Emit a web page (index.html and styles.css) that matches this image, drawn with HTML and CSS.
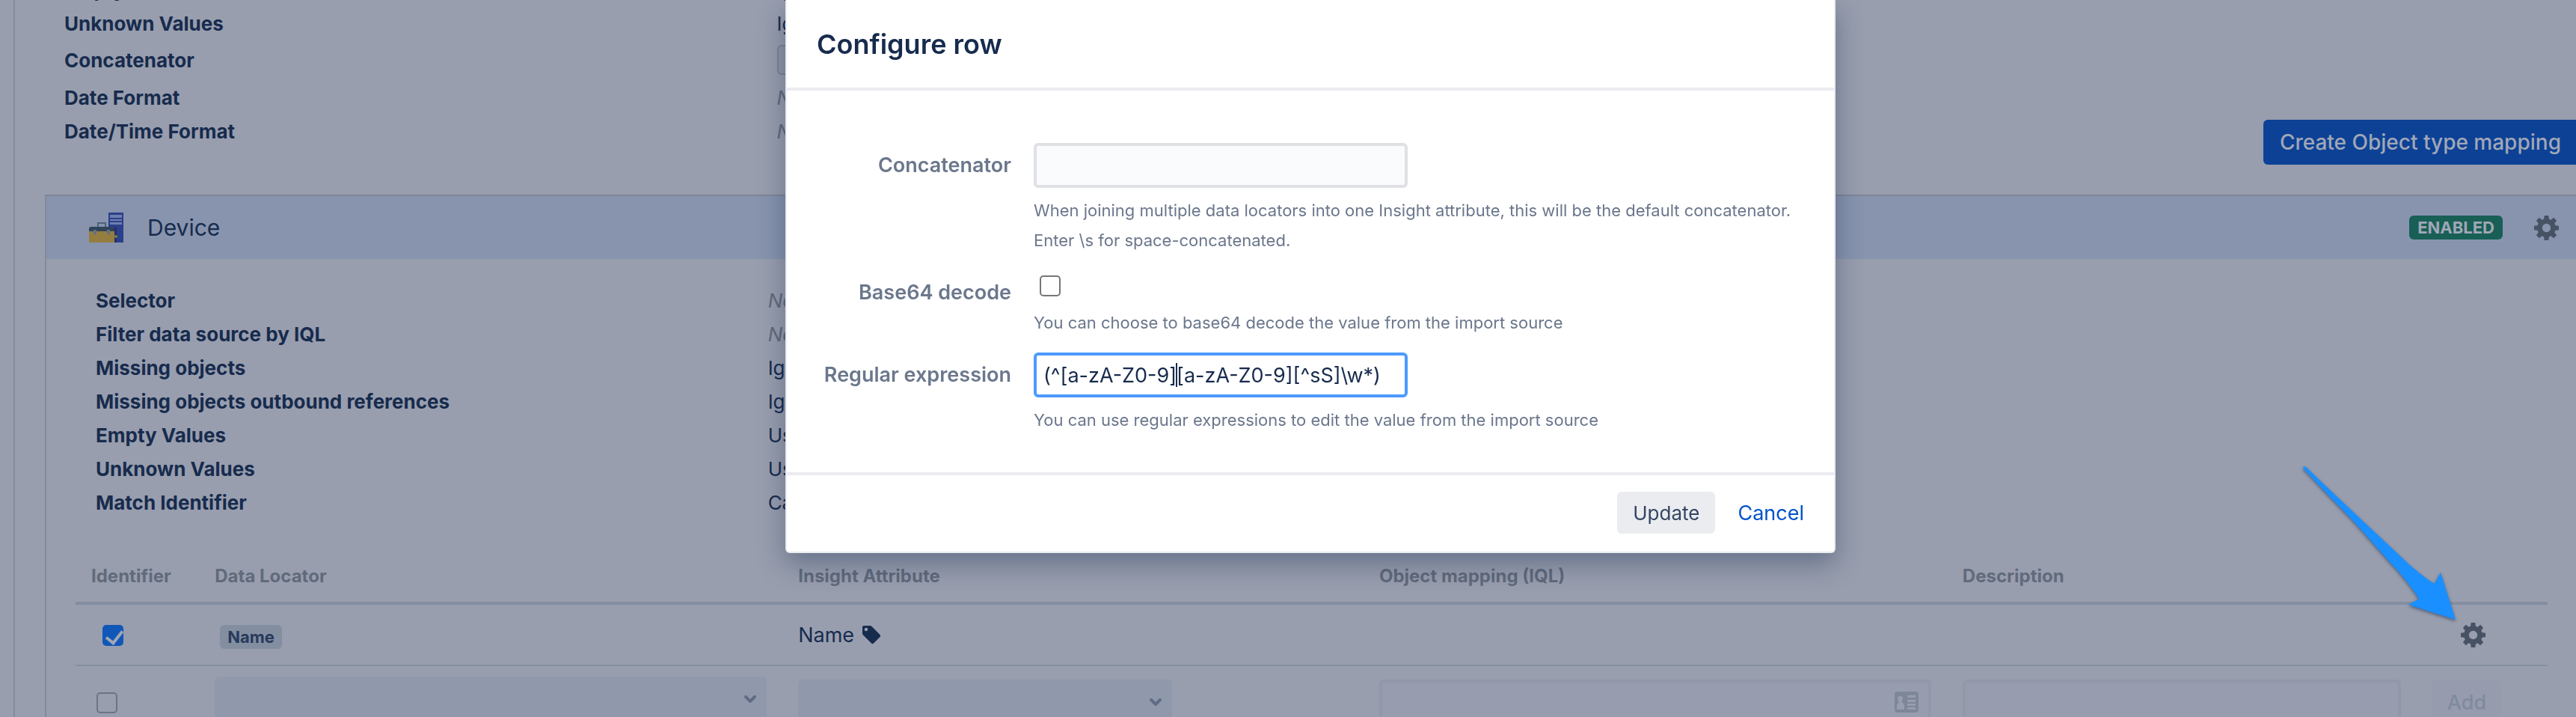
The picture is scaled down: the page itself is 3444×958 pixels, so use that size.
FILE: index.html
```html
<!DOCTYPE html>
<html lang="en">
<head>
    <meta charset="UTF-8">
    <meta name="viewport" content="width=device-width, initial-scale=1.0">
    <title>Object type mapping - Configure row</title>
    <link rel="stylesheet" href="styles.css">
</head>
<body>
    <svg class="sprite" width="0" height="0" aria-hidden="true">
        <symbol id="gear" viewBox="0 0 32 32">
            <g fill="currentColor">
                <path fill-rule="evenodd" d="M16 4a12 12 0 1 0 0 24a12 12 0 1 0 0-24zM16 10.500a5.500 5.500 0 1 1 0 11a5.500 5.500 0 1 1 0-11z"/>
                <path id="tooth" d="M12.500 6l.8-6h5.400l.8 6z"/>
                <use href="#tooth" transform="rotate(45 16 16)"/>
                <use href="#tooth" transform="rotate(90 16 16)"/>
                <use href="#tooth" transform="rotate(135 16 16)"/>
                <use href="#tooth" transform="rotate(180 16 16)"/>
                <use href="#tooth" transform="rotate(225 16 16)"/>
                <use href="#tooth" transform="rotate(270 16 16)"/>
                <use href="#tooth" transform="rotate(315 16 16)"/>
            </g>
        </symbol>
        <symbol id="chevron" viewBox="0 0 18 12">
            <path d="M3 3l6 6l6-6" fill="none" stroke="currentColor" stroke-width="4" stroke-linecap="round" stroke-linejoin="round"/>
        </symbol>
    </svg>

    <main class="page">
        <section class="summary">
            <dl class="details">
                <dt>Empty Values</dt><dd>Ig</dd>
                <dt>Unknown Values</dt><dd>Ig</dd>
                <dt class="tall">Concatenator</dt><dd class="tall"><span class="code-box"></span></dd>
                <dt>Date Format</dt><dd class="none">No</dd>
                <dt>Date/Time Format</dt><dd class="none">No</dd>
            </dl>
            <button class="create-button" type="button">Create Object type mapping</button>
        </section>

        <section class="panel">
            <header class="panel-header">
                <svg class="device-icon" viewBox="0 0 46 40" width="46" height="40">
                    <rect x="26" y="0" width="20" height="40" fill="#2b3f8b"/>
                    <path d="M28 3h16v4H28zM28 9h16v2H28zM28 13h16v3H28z" fill="#6f7fae"/>
                    <rect x="31" y="20" width="6" height="20" fill="#22306e"/>
                    <circle cx="36" cy="32" r="2" fill="#6d8a4a"/>
                    <path d="M12 20v-6h10v6" fill="none" stroke="#4b637b" stroke-width="2"/>
                    <path d="M0 26v-4q0-3 3-3h28q3 0 3 3v4z" fill="#2f4459"/>
                    <rect x="0" y="25" width="34" height="15" fill="#957d40"/>
                    <path d="M6 23h4v6h-4zM24 23h4v6h-4z" fill="#5f7184"/>
                </svg>
                <h2>Device</h2>
                <span class="status">ENABLED</span>
                <button class="icon-button" type="button" aria-label="Device settings"><svg width="33" height="33"><use href="#gear"/></svg></button>
            </header>

            <dl class="details panel-details">
                <dt>Selector</dt><dd class="none">No</dd>
                <dt>Filter data source by IQL</dt><dd class="none">No</dd>
                <dt>Missing objects</dt><dd>Ig</dd>
                <dt>Missing objects outbound references</dt><dd>Ig</dd>
                <dt>Empty Values</dt><dd>Us</dd>
                <dt>Unknown Values</dt><dd>Us</dd>
                <dt>Match Identifier</dt><dd>Ca</dd>
            </dl>

            <table class="mapping">
                <thead>
                    <tr>
                        <th class="col-id">Identifier</th>
                        <th class="col-locator">Data Locator</th>
                        <th class="col-attr">Insight Attribute</th>
                        <th class="col-iql">Object mapping (IQL)</th>
                        <th class="col-desc">Description</th>
                        <th></th>
                    </tr>
                </thead>
                <tbody>
                    <tr class="saved">
                        <td class="check"><input type="checkbox" checked aria-label="Name is identifier"></td>
                        <td class="tag-cell"><span class="tag">Name</span></td>
                        <td>
                            <span class="attribute">Name
                                <svg viewBox="0 0 26 26" width="26" height="26"><path fill-rule="evenodd" fill="currentColor" d="M1 3Q1 1 3 1h8q1.500 0 2.500 1l11 11q1.500 1.500 0 3l-8.500 8.500q-1.500 1.500-3 0L2 13.500Q1 12.500 1 11zM6 3.700a2.300 2.300 0 1 0 0 4.600a2.300 2.300 0 1 0 0-4.600z"/></svg>
                            </span>
                        </td>
                        <td></td>
                        <td></td>
                        <td class="actions"><button class="icon-button" type="button" aria-label="Configure row"><svg width="33" height="33"><use href="#gear"/></svg></button></td>
                    </tr>
                    <tr class="new">
                        <td class="check"><input type="checkbox" aria-label="New row is identifier"></td>
                        <td class="locator">
                            <div class="select-wrap">
                                <select aria-label="Data locator"><option></option></select>
                                <svg width="18" height="12"><use href="#chevron"/></svg>
                            </div>
                        </td>
                        <td>
                            <div class="select-wrap half">
                                <select aria-label="Insight attribute"><option></option></select>
                                <svg width="18" height="12"><use href="#chevron"/></svg>
                            </div>
                        </td>
                        <td>
                            <div class="select-wrap">
                                <input type="text" aria-label="Object mapping">
                                <svg class="card-icon" viewBox="0 0 32 28" width="32" height="28"><rect width="32" height="28" rx="4" fill="#7d8797"/><path d="M3 24v-5q0-3 3-5q-2-2-2-5t3.500-3t3.500 3t-2 5q4 2 4 5v5zM17 5h11v3H17zM17 11h11v3H17zM17 16h11v3H17zM17 21h11v3H17z" fill="#989eae"/></svg>
                            </div>
                        </td>
                        <td><input type="text" aria-label="Description"></td>
                        <td><button class="add-button" type="button" disabled>Add</button></td>
                    </tr>
                </tbody>
            </table>
        </section>
    </main>

    <!-- pointer to the row settings -->
    <svg class="arrow" viewBox="0 0 218 224" width="218" height="224" aria-hidden="true">
        <path d="M7 10Q7 6 11 8Q40 36 72 66Q105 97 136 126Q158 148 182.500 164L191 149L211 212L148 192L162 184Q146 159 122 134Q100 109 75 81Q40 45 7 10z" fill="#1a8fff"/>
    </svg>

    <div class="overlay">
        <form class="dialog" role="dialog" aria-labelledby="dialog-title">
            <header class="dialog-header">
                <h1 id="dialog-title">Configure row</h1>
            </header>
            <div class="dialog-body">
                <div class="field">
                    <label for="concatenator">Concatenator</label>
                    <div>
                        <input type="text" id="concatenator">
                        <p>When joining multiple data locators into one Insight attribute, this will be the default concatenator.<br>Enter \s for space-concatenated.</p>
                    </div>
                </div>
                <div class="field">
                    <label for="base64">Base64 decode</label>
                    <div>
                        <input type="checkbox" id="base64">
                        <p>You can choose to base64 decode the value from the import source</p>
                    </div>
                </div>
                <div class="field">
                    <label for="regex">Regular expression</label>
                    <div>
                        <div class="input-wrap">
                            <input type="text" id="regex" class="active" value="(^[a-zA-Z0-9][a-zA-Z0-9][^sS]\w*)">
                            <span class="caret"></span>
                        </div>
                        <p>You can use regular expressions to edit the value from the import source</p>
                    </div>
                </div>
            </div>
            <footer class="dialog-footer">
                <button class="update-button" type="button">Update</button>
                <a href="#">Cancel</a>
            </footer>
        </form>
    </div>
</body>
</html>
```

FILE: styles.css
```css
* {
    box-sizing: border-box;
}
body {
    margin: 0;
    height: 100vh;
    overflow: hidden;
    background-color: #989eae;
    color: #172b4d;
    font-family: Inter, "Liberation Sans", sans-serif;
    font-size: 26px;
}
button, input, select {
    font-family: inherit;
    font-size: inherit;
    margin: 0;
}
h1, h2, p, dl, dd {
    margin: 0;
}
.sprite {
    position: absolute;
}
.page {
    margin-top: -36px;
    margin-left: 18px;
    border-left: 2px solid #828b9b;
}
.summary {
    display: flex;
    align-items: flex-end;
    height: 256px;
    padding-left: 66px;
    margin-bottom: 40px;
}
.details {
    display: grid;
    grid-template-columns: 32.4% 1fr;
    align-self: flex-start;
    flex: 1;
    line-height: 45px;
}
.details dt {
    font-weight: 700;
}
.details .none {
    color: #616a7b;
    font-style: italic;
}
.details .tall {
    line-height: 54px;
}
.code-box {
    display: block;
    width: 60px;
    height: 40px;
    margin-top: 6px;
    border: 2px solid #7d8696;
    border-radius: 6px;
    background-color: #9097a8;
}
.create-button {
    height: 60px;
    padding: 0 20px 0 22px;
    border: none;
    border-radius: 6px 0 0 6px;
    background-color: #0c4196;
    color: #a1a7b6;
    font-size: 28px;
    font-weight: 500;
}

/* Device panel */
.panel {
    margin-left: 40px;
    border-top: 2px solid #7d8696;
    border-left: 2px solid #828b9b;
}
.panel-header {
    display: flex;
    align-items: center;
    height: 84px;
    padding: 0 23px 0 57px;
    background-color: #8894ae;
}
.panel-header h2 {
    flex: 1;
    margin-left: 32px;
    font-size: 30px;
    font-weight: 400;
}
.status, .tag {
    height: 32px;
    border-radius: 6px;
    line-height: 32px;
    font-size: 22px;
    font-weight: 700;
}
.status {
    padding: 0 11px;
    margin-right: 42px;
    background-color: #185f56;
    color: #a1a7b6;
}
.icon-button {
    display: flex;
    padding: 0;
    border: none;
    background: none;
    color: #475264;
}
.panel-details {
    grid-template-columns: 27.1% 1fr;
    padding: 33px 0 0 66px;
}

/* Mapping table */
.mapping {
    width: calc(100% - 77px);
    margin: 42px 38px 0 39px;
    table-layout: fixed;
    border-spacing: 0;
}
.mapping th {
    height: 72px;
    padding: 0 21px 2px;
    border-bottom: 4px solid #838ea0;
    color: #616a7b;
    font-size: 24px;
    font-weight: 700;
    text-align: left;
}
.col-id { width: 5%; }
.col-locator { width: 23.6%; }
.col-attr { width: 23.5%; }
.col-iql { width: 23.6%; }
.col-desc { width: 19%; }
.mapping td {
    padding: 0 21px;
}
.saved td {
    height: 82px;
    border-bottom: 2px solid #838ea0;
}
.mapping .new td {
    padding-top: 18px;
    vertical-align: top;
}
.mapping .new .locator {
    padding-top: 14px;
}
.mapping .new .check {
    padding: 35px 0 0 28px;
}
.mapping .check {
    padding: 2px 0 0 36px;
}
.mapping .tag-cell {
    padding: 4px 0 0 28px;
}
.tag {
    display: inline-block;
    padding: 0 10px;
    background-color: #838ea0;
    color: #273a5c;
}
.attribute {
    display: flex;
    align-items: center;
    gap: 10px;
    font-size: 27px;
}
.mapping .actions {
    padding-left: 59px;
}
input[type="checkbox"] {
    display: block;
    appearance: none;
    width: 28px;
    height: 28px;
    border: 2px solid #767676;
    border-radius: 5px;
    background-color: #fff;
}
.mapping input[type="checkbox"] {
    border-color: #6c7484;
    background-color: transparent;
}
.mapping input[type="checkbox"]:checked {
    border: none;
    background-color: #1157b8;
}
.mapping input[type="checkbox"]:checked::after {
    content: "";
    display: block;
    width: 10px;
    height: 18px;
    margin: 3px 0 0 9px;
    border: solid #a1a7b6;
    border-width: 0 4px 4px 0;
    transform: rotate(38deg);
}
.select-wrap {
    position: relative;
}
.select-wrap.half {
    width: 500px;
    max-width: 100%;
}
.select-wrap svg {
    position: absolute;
    top: 24px;
    right: 13px;
    color: #5f6c84;
}
.select-wrap .card-icon {
    top: 16px;
    right: 17px;
}
.mapping select, .mapping input[type="text"] {
    display: block;
    width: 100%;
    height: 60px;
    border: none;
    border-radius: 6px;
    appearance: none;
    background-color: #9098ab;
}
.mapping input[type="text"] {
    border: 4px solid #9098a9;
    background-color: #979dae;
}
.add-button {
    height: 60px;
    padding: 0 20px;
    border: none;
    border-radius: 6px;
    background-color: #969cae;
    color: #808a9f;
    font-size: 27px;
    font-weight: 500;
}

.arrow {
    position: fixed;
    top: 616px;
    right: 154px;
    z-index: 2;
    filter: drop-shadow(0 2px 2px rgba(9, 30, 66, 0.5));
}

/* Dialog */
.overlay {
    position: fixed;
    inset: 0;
    display: flex;
    justify-content: center;
    align-items: flex-start;
    padding-left: 60px;
}
.dialog {
    width: 42%;
    max-width: 1404px;
    border: 2px solid #ebecf0;
    border-top: none;
    border-radius: 0 0 6px 6px;
    background-color: #fff;
    box-shadow: 0 14px 36px rgba(9, 30, 66, 0.35);
}
.dialog-header {
    display: flex;
    align-items: center;
    height: 121px;
    padding: 0 40px;
    border-bottom: 4px solid #ebecf0;
}
.dialog-header h1 {
    font-size: 36px;
    font-weight: 600;
}
.dialog-body {
    display: grid;
    gap: 20px;
    padding: 70px 20px 50px 0;
}
.field {
    display: grid;
    grid-template-columns: 300px 1fr;
    gap: 30px;
    color: #6b778c;
}
.field label {
    line-height: 60px;
    font-size: 27px;
    font-weight: 600;
    text-align: right;
    white-space: nowrap;
}
.field p {
    margin-top: 10px;
    font-size: 22px;
    line-height: 40px;
    white-space: nowrap;
}
.field input[type="text"] {
    display: block;
    width: 500px;
    height: 60px;
    padding: 0 9px;
    border: 4px solid #dfe1e5;
    border-radius: 6px;
    background-color: #fafbfc;
    color: #172b4d;
    font-size: 27px;
}
.field input.active {
    border-color: #4c9aff;
    background-color: #fff;
    outline: none;
}
.field input[type="checkbox"] {
    margin: 7px 8px 15px;
}
.input-wrap {
    position: relative;
}
.caret {
    position: absolute;
    top: 14px;
    left: 190px;
    width: 2px;
    height: 32px;
    background-color: #172b4d;
}
.dialog-footer {
    display: flex;
    justify-content: flex-end;
    align-items: center;
    gap: 30px;
    padding: 22px 40px 24px;
    border-top: 4px solid #ebecf0;
}
.update-button {
    height: 56px;
    padding: 0 21px;
    border: none;
    border-radius: 6px;
    background-color: #ebecf0;
    color: #344563;
}
.dialog-footer a {
    color: #0052cc;
    font-size: 27px;
    text-decoration: none;
}
```
